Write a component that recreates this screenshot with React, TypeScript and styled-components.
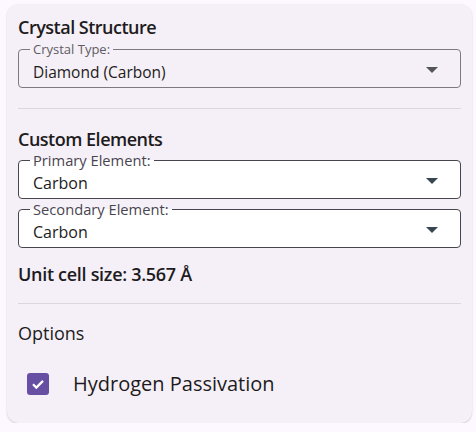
import React from "react";
import styled, { createGlobalStyle } from "styled-components";

const Global = createGlobalStyle`
  html, body { margin: 0; padding: 0; background: #fdf7ff; }
  body { font-family: "Open Sans", "Noto Sans", sans-serif; color: #1d1b20; }
`;

const Card = styled.div`
  box-sizing: border-box;
  margin: 4px 0 0 7px;
  width: 465px;
  height: 419px;
  background: #f5f0f7;
  border-radius: 12px;
  box-shadow: 0 1px 2px rgba(0, 0, 0, 0.18);
  padding: 11px 11px 0 11px;
  display: flex;
  flex-direction: column;
`;

const Heading = styled.div<{ $weight?: number; $mt?: number; $ls?: number }>`
  font-size: 18px;
  line-height: 24px;
  font-weight: ${(p) => p.$weight ?? 600};
  letter-spacing: ${(p) => p.$ls ?? -0.5}px;
  margin-top: ${(p) => p.$mt ?? 0}px;
  color: #1d1b20;
`;

const Field = styled.fieldset<{ $filled?: boolean; $mt: number; $border: string }>`
  margin: ${(p) => p.$mt}px 0 0 0;
  padding: 0 22px 0 11px;
  border: 1px solid ${(p) => p.$border};
  border-radius: 4px;
  background: ${(p) => (p.$filled ? "#ffffff" : "transparent")};
  min-width: 0;
`;

const Legend = styled.legend<{ $size: number; $color: string }>`
  padding: 0 3px;
  font-size: ${(p) => p.$size}px;
  line-height: ${(p) => p.$size + 2}px;
  color: ${(p) => p.$color};
`;

const ValueRow = styled.div<{ $h: number; $size: number }>`
  display: flex;
  align-items: center;
  justify-content: space-between;
  height: ${(p) => p.$h}px;
  padding-left: 3px;
  font-size: ${(p) => p.$size}px;
  color: #1d1b20;
`;

const Arrow = styled.span<{ $color: string }>`
  width: 0;
  height: 0;
  border-left: 6px solid transparent;
  border-right: 6px solid transparent;
  border-top: 6px solid ${(p) => p.$color};
  margin-bottom: 5px;
`;

const Divider = styled.div<{ $mt: number }>`
  height: 1px;
  background: #dcd7de;
  margin-top: ${(p) => p.$mt}px;
`;

const CheckRow = styled.label`
  display: flex;
  align-items: center;
  margin-top: 25px;
  padding-left: 9px;
  gap: 24px;
  font-size: 20px;
  color: #1d1b20;
`;

const Box = styled.span`
  width: 22px;
  height: 22px;
  border-radius: 3px;
  background: #6750a4;
  display: inline-flex;
  align-items: center;
  justify-content: center;
`;

function Select(props: {
  label: string;
  value: string;
  filled?: boolean;
  labelSize: number;
  valueSize: number;
  labelColor: string;
  border: string;
  arrow: string;
  mt: number;
  rowH: number;
}) {
  return (
    <Field $filled={props.filled} $mt={props.mt} $border={props.border}>
      <Legend $size={props.labelSize} $color={props.labelColor}>
        {props.label}
      </Legend>
      <ValueRow $h={props.rowH} $size={props.valueSize}>
        <span>{props.value}</span>
        <Arrow $color={props.arrow} />
      </ValueRow>
    </Field>
  );
}

export default function App() {
  return (
    <>
      <Global />
      <Card>
        <Heading>Crystal Structure</Heading>
        <Select
          label="Crystal Type:"
          value="Diamond (Carbon)"
          labelSize={13}
          valueSize={15.5}
          labelColor="#5f5b63"
          border="#7d7882"
          arrow="#555"
          mt={3}
          rowH={30}
        />
        <Divider $mt={20} />
        <Heading $mt={18}>Custom Elements</Heading>
        <Select
          label="Primary Element:"
          value="Carbon"
          filled
          labelSize={14.7}
          valueSize={16}
          labelColor="#49454f"
          border="#49454f"
          arrow="#37474f"
          mt={1}
          rowH={29}
        />
        <Select
          label="Secondary Element:"
          value="Carbon"
          filled
          labelSize={14.7}
          valueSize={16}
          labelColor="#49454f"
          border="#49454f"
          arrow="#37474f"
          mt={2}
          rowH={30}
        />
        <Heading $mt={14} $ls={-0.3}>Unit cell size: 3.567 Å</Heading>
        <Divider $mt={17} />
        <Heading $mt={17} $weight={500} $ls={0}>Options</Heading>
        <CheckRow>
          <Box>
            <svg width="16" height="16" viewBox="0 0 16 16">
              <path d="M3 8.3l3.3 3.3L13 4.9" fill="none" stroke="#fff" strokeWidth="2.2" />
            </svg>
          </Box>
          Hydrogen Passivation
        </CheckRow>
      </Card>
    </>
  );
}
